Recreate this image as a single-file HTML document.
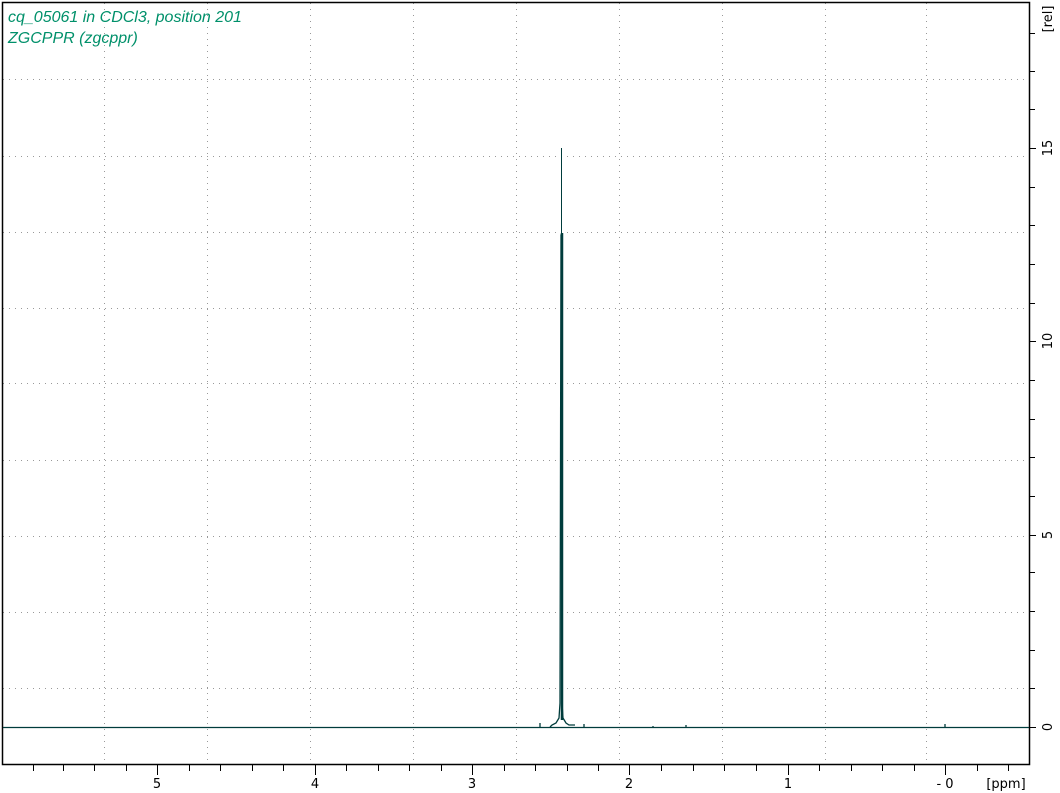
<!DOCTYPE html>
<html><head><style>
html,body{margin:0;padding:0;background:#fff;}
svg{display:block;}
text{font-family:"DejaVu Sans","Liberation Sans",sans-serif;}
</style></head><body>
<svg width="1060" height="793" viewBox="0 0 1060 793" xmlns="http://www.w3.org/2000/svg">
<rect width="1060" height="793" fill="#fff"/>
<g stroke="#999" stroke-width="1" stroke-dasharray="1,5">
<line x1="3" y1="79.5" x2="1028" y2="79.5"/>
<line x1="3" y1="156.5" x2="1028" y2="156.5"/>
<line x1="3" y1="232.5" x2="1028" y2="232.5"/>
<line x1="3" y1="308.5" x2="1028" y2="308.5"/>
<line x1="3" y1="383.5" x2="1028" y2="383.5"/>
<line x1="3" y1="460.5" x2="1028" y2="460.5"/>
<line x1="3" y1="536.5" x2="1028" y2="536.5"/>
<line x1="3" y1="612.5" x2="1028" y2="612.5"/>
<line x1="3" y1="688.5" x2="1028" y2="688.5"/>
<line x1="104.5" y1="3" x2="104.5" y2="763"/>
<line x1="207.5" y1="3" x2="207.5" y2="763"/>
<line x1="310.5" y1="3" x2="310.5" y2="763"/>
<line x1="413.5" y1="3" x2="413.5" y2="763"/>
<line x1="516.5" y1="3" x2="516.5" y2="763"/>
<line x1="619.5" y1="3" x2="619.5" y2="763"/>
<line x1="722.5" y1="3" x2="722.5" y2="763"/>
<line x1="825.5" y1="3" x2="825.5" y2="763"/>
<line x1="926.5" y1="3" x2="926.5" y2="763"/>
</g>
<rect x="2.5" y="2.5" width="1027" height="762" fill="none" stroke="#000" stroke-width="1.5"/>
<g stroke="#000" stroke-width="1">
<path d="M33.5 765v6M63.5 765v6M94.5 765v6M126.5 765v6M157.5 765v10M189.5 765v6M220.5 765v6M252.5 765v6M283.5 765v6M315.5 765v10M346.5 765v6M378.5 765v6M409.5 765v6M441.5 765v6M472.5 765v10M504.5 765v6M535.5 765v6M567.5 765v6M598.5 765v6M629.5 765v10M661.5 765v6M693.5 765v6M724.5 765v6M756.5 765v6M788.5 765v10M819.5 765v6M851.5 765v6M882.5 765v6M914.5 765v6M945.5 765v10M977.5 765v6M1008.5 765v6"/>
<path d="M1030 727.5h6M1030 688.5h5M1030 650.5h5M1030 611.5h5M1030 572.5h5M1030 535.5h6M1030 496.5h5M1030 457.5h5M1030 419.5h5M1030 380.5h5M1030 341.5h6M1030 303.5h5M1030 264.5h5M1030 225.5h5M1030 187.5h5M1030 148.5h6M1030 109.5h5M1030 71.5h5M1030 33.5h5"/>
</g>
<g fill="#000" font-size="13">
<text x="157" y="788" text-anchor="middle">5</text>
<text x="315" y="788" text-anchor="middle">4</text>
<text x="472" y="788" text-anchor="middle">3</text>
<text x="629" y="788" text-anchor="middle">2</text>
<text x="788" y="788" text-anchor="middle">1</text>
<text x="945" y="788" text-anchor="middle">- 0</text>
<text x="1006" y="788" text-anchor="middle">[ppm]</text>
<text transform="translate(1052,727) rotate(-90)" text-anchor="middle">0</text>
<text transform="translate(1052,535) rotate(-90)" text-anchor="middle">5</text>
<text transform="translate(1052,341) rotate(-90)" text-anchor="middle">10</text>
<text transform="translate(1052,148) rotate(-90)" text-anchor="middle">15</text>
<text transform="translate(1052,19) rotate(-90)" text-anchor="middle">[rel]</text>
</g>
<g fill="#00906a" font-size="16" font-style="italic" font-family="Liberation Sans, sans-serif">
<text x="8" y="22" style="font-family:'Liberation Sans',sans-serif">cq_05061 in CDCl3, position 201</text>
<text x="8" y="43" style="font-family:'Liberation Sans',sans-serif">ZGCPPR (zgcppr)</text>
</g>
<g stroke="#003c3c" fill="none">
<line x1="3" y1="727.5" x2="1029" y2="727.5" stroke-width="1.2"/>
<path d="M540 727v-4M550 727l2 -2l4 -2l3 -5l1 -15l1 -468l1 0l0 468l1 15l3 5l3 2h6M584 727v-3M653 727v-1M686 727v-2M945 727v-3" stroke-width="1.3"/>
<line x1="561.5" y1="148" x2="561.5" y2="240" stroke-width="1"/>
<line x1="562" y1="233" x2="562" y2="720" stroke-width="2.5"/>
</g>
</svg>
</body></html>
